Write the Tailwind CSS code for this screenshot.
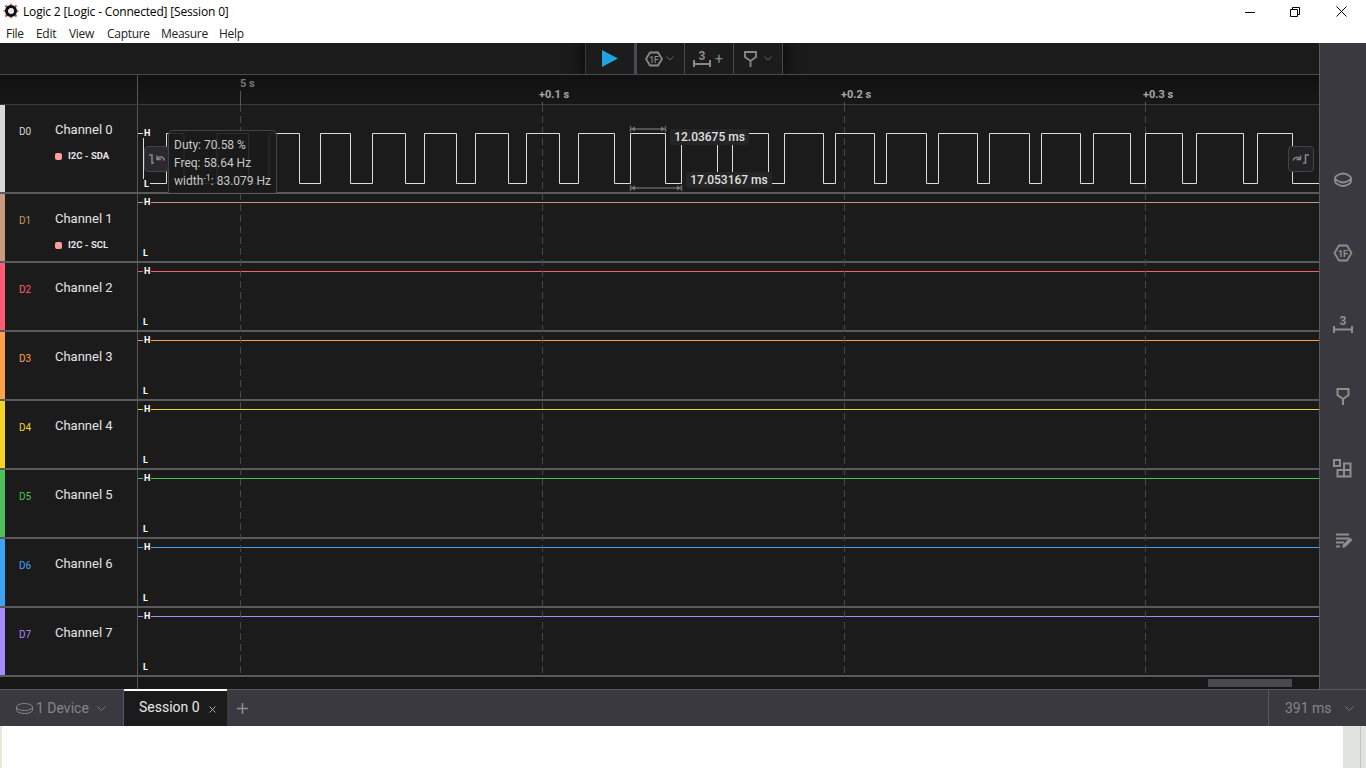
<!DOCTYPE html>
<html lang="en">
<head>
    <meta charset="UTF-8">
    <title>Logic 2 [Logic - Connected] [Session 0]</title>
    <script src="https://cdn.jsdelivr.net/npm/@tailwindcss/browser@4"></script>
</head>
<body class="w-[1366px] h-[768px] overflow-hidden bg-white flex flex-col font-['Roboto',sans-serif]">

    <!-- Window title + menu -->
    <div class="h-[43px] bg-white text-black font-['Open_Sans',sans-serif] text-[12px]">
        <div class="h-[23px] flex items-center relative">
            <svg class="ml-[3px] mt-[-1px]" width="16" height="16" viewBox="0 0 16 16">
                <rect x="1" y="1" width="14" height="14" rx="3" fill="#f2f2f2"/>
                <path d="M8 .5v3M8 12.500v3M.5 8h3M12.500 8h3" stroke="#e0883a" stroke-width="2"/>
                <path d="M2.500 2.500l2 2M11.500 11.500l2 2" stroke="#8b5bd6" stroke-width="2"/>
                <path d="M13.500 2.500l-2 2M4.500 11.500l-2 2" stroke="#d24c6a" stroke-width="2"/>
                <circle cx="8" cy="8" r="4.500" fill="none" stroke="#111" stroke-width="3"/>
                <circle cx="8" cy="8" r="1.500" fill="#ddd"/>
            </svg>
            <span class="ml-[4px] tracking-[-0.17px]">Logic 2 [Logic - Connected] [Session 0]</span>
            <div class="ml-auto flex items-center h-full">
                <svg class="mr-[35px]" width="10" height="10" viewBox="0 0 10 10"><path d="M0 5.5h10" stroke="#000"/></svg>
                <svg class="mr-[36px]" width="10" height="10" viewBox="0 0 10 10"><path d="M.5 2.5h7v7h-7zM2.5 2.5v-2h7v7h-2" fill="none" stroke="#000"/></svg>
                <svg class="mr-[19px]" width="11" height="11" viewBox="0 0 11 11"><path d="M.5.5l10 10M10.5.5l-10 10" stroke="#000"/></svg>
            </div>
        </div>
        <div class="h-[20px] flex items-center pl-[6px] pt-[1px] text-[#222] tracking-[-0.3px]">
            <span class="w-[30px]">File</span>
            <span class="w-[33px]">Edit</span>
            <span class="w-[38px]">View</span>
            <span class="w-[54px]">Capture</span>
            <span class="w-[58px]">Measure</span>
            <span>Help</span>
        </div>
    </div>

    <!-- App body -->
    <div class="h-[646px] flex bg-[#1b1b1b]">
        <div class="w-[1319px] relative flex flex-col">

            <!-- Toolbar -->
            <div class="h-[32px] flex justify-center border-b border-[#4a4a4e] overflow-hidden">
                <div class="flex h-full ml-[49px] bg-[#1c1c1c] shadow-[0_0_20px_#000]">
                    <div class="w-[49px] border-l border-[#3c3c3e] flex items-center justify-center">
                        <svg width="16" height="17" viewBox="0 0 16 17"><path d="M0 0l16 8.5L0 17z" fill="#22a3e0"/></svg>
                    </div>
                    <div class="w-[3px] bg-[#4a4a4e]"></div>
                    <div class="w-[48px] border-r border-[#4a4a4e] flex items-center justify-center gap-[3px] pr-[2px]">
                        <svg width="18" height="16" viewBox="0 0 18 16"><path d="M5 1.5h8L17 8l-4 6.500H5L1 8z" fill="none" stroke="#8a8a8a" stroke-width="1.800"/><text x="9" y="11.500" font-size="8.500" font-weight="500" font-family="Roboto" text-anchor="middle" fill="#8a8a8a">1F</text></svg>
                        <svg width="8" height="5" viewBox="0 0 8 5"><path d="M.5.500l3.500 3.500 3.500-3.500" fill="none" stroke="#666"/></svg>
                    </div>
                    <div class="w-[49px] border-r border-[#4a4a4e] flex items-center justify-center gap-[4px] pr-[2px]">
                        <svg width="18" height="18" viewBox="0 0 18 18"><text x="9" y="10" font-size="12" font-weight="700" font-family="Roboto" text-anchor="middle" fill="#8a8a8a">3</text><path d="M1 10v7M17 10v7M1 14h16" fill="none" stroke="#8a8a8a" stroke-width="2"/></svg>
                        <span class="text-[#8a8a8a] text-[14px] leading-none">+</span>
                    </div>
                    <div class="w-[49px] border-r border-[#4a4a4e] flex items-center justify-center gap-[7px]">
                        <svg width="13" height="16" viewBox="0 0 13 16"><path d="M1 1h11v5l-5.500 4L1 6zM6.500 10v6" fill="none" stroke="#8a8a8a" stroke-width="1.800"/></svg>
                        <svg width="8" height="5" viewBox="0 0 8 5"><path d="M.5.500l3.500 3.500 3.500-3.500" fill="none" stroke="#666"/></svg>
                    </div>
                </div>
            </div>

            <!-- Time ruler -->
            <div class="h-[30px] flex border-b border-[#3a3a3c] bg-gradient-to-b from-[#111111] to-[#171717] shrink-0">
                <div class="w-[138px] border-r border-[#555] shrink-0"></div>
                <div class="flex-1 relative font-bold text-[11px] leading-[13px] text-[#a8a8a8]">
                    <span class="absolute left-[102px] top-[2px] text-[#777]">5 s</span>
                    <span class="absolute left-[401px] top-[13px]">+0.1 s</span>
                    <span class="absolute left-[703px] top-[13px]">+0.2 s</span>
                    <span class="absolute left-[1005px] top-[13px]">+0.3 s</span>
                </div>
            </div>

            <!-- Channel 0 -->
            <div class="h-[89px] flex border-b-2 border-[#5a5a5c] shrink-0">
                <div class="w-[5px] bg-[#d8d8d8]"></div>
                <div class="w-[133px] border-r border-[#555] pt-[17px] flex">
                    <span class="w-[14px] ml-[14px] mt-[3px] text-[10px] leading-[14px] text-[#d8d8d8]">D0</span>
                    <div class="ml-[22px]">
                        <div class="text-[13px] leading-[16px] text-[#e4e4e4]">Channel 0</div>
                        <div class="mt-[12px] flex items-center text-[9.500px] leading-[12px] font-bold text-[#e4e4e4]"><span class="w-[7px] h-[7px] rounded-[2px] bg-[#ff9d9d] mr-[6px]"></span>I2C - SDA</div>
                    </div>
                </div>
                <div class="flex-1 relative">
                    <svg class="absolute inset-0 z-[11]" width="1181" height="87" viewBox="138 105 1181 87">
                        <path d="M138 133.500H143.500V183.500H166.500V133.500H184V183.500H217V133.500H248.500V183.500H269V133.500H299.500V183.500H320.500V133.500H350.500V183.500H372.500V133.500H405.500V183.500H424.500V133.500H456.500V183.500H475.500V133.500H508.500V183.500H526.500V133.500H559.500V183.500H578.500V133.500H614.500V183.500H630.500V133.500H665.500V183.500H681.500V133.500H717.500V183.500H732.500V133.500H768.500V183.500H784.500V133.500H823.500V183.500H835.500V133.500H874.500V183.500H886.500V133.500H926.500V183.500H938.500V133.500H977.500V183.500H989.500V133.500H1029.500V183.500H1041.500V133.500H1080.500V183.500H1093.500V133.500H1130.500V183.500H1145.500V133.500H1182.500V183.500H1196.500V133.500H1243.500V183.500H1257.500V133.500H1292.500V183.500H1319" fill="none" stroke="#dcdcdc"/>
                        <path d="M630.500 126v6M665.500 126v6M631 129h34M630.500 185v6M681.500 185v6M631 188h50" fill="none" stroke="#666" stroke-width="1.500"/>
                        <path d="M631 129l4-2.500v5zM665 129l-4-2.500v5zM631 188l4-2.500v5zM681 188l-4-2.500v5z" fill="#777"/>
                    </svg>
                    <span class="absolute z-20 left-[5px] top-[23px] px-[1px] bg-[#1b1b1b] text-[9px] leading-[10px] font-bold text-white">H</span>
                    <span class="absolute z-20 left-[5px] top-[74px] px-[1px] bg-[#1b1b1b] text-[9px] leading-[10px] font-bold text-white">L</span>
                    <div class="absolute z-20 left-[6px] top-[41px] w-[25px] h-[26px] rounded-[4px] border border-[#444] bg-[#2a2a2c] flex items-center justify-center">
                        <svg class="shrink-0" width="18" height="12" viewBox="0 0 18 12"><path d="M1 2h3v8h2" fill="none" stroke="#858585" stroke-width="1.600"/><path d="M9.500 6.500c1-3.500 5.500-3.500 7 1M9 2.500v4h4" fill="none" stroke="#858585" stroke-width="1.500"/></svg>
                    </div>
                    <div class="absolute left-[30px] top-[25px] w-[109px] h-[63px] z-20 rounded-t-[5px] border border-b-0 border-[#444] bg-[#1b1b1b]/90 pl-[5px] pt-[5px] text-[12px] leading-[18px] text-[#c8c8c8] whitespace-nowrap">
                        <div>Duty: 70.58 %</div>
                        <div>Freq: 58.64 Hz</div>
                        <div>width<sup class="text-[9px] leading-none">-1</sup>: 83.079 Hz</div>
                    </div>
                    <div class="absolute left-[532px] top-[24px] h-[16px] w-[79px] z-20 rounded-[2px] bg-[#252526] text-[12px] leading-[16px] font-medium text-[#e0e0e0] text-center whitespace-nowrap">12.03675 ms</div>
                    <div class="absolute left-[548px] top-[67px] h-[16px] w-[86px] z-20 rounded-[2px] bg-[#252526] text-[12px] leading-[16px] font-medium text-[#e0e0e0] text-center whitespace-nowrap">17.053167 ms</div>
                    <div class="absolute z-20 left-[1150px] top-[41px] w-[26px] h-[26px] rounded-[4px] border border-[#444] bg-[#232325] flex items-center justify-center">
                        <svg class="shrink-0" width="18" height="12" viewBox="0 0 18 12"><path d="M1 7.500c1.500-4 5.500-4 7-1M8.500 2.500v4h-4" fill="none" stroke="#858585" stroke-width="1.500"/><path d="M11 10h2.500V2H17" fill="none" stroke="#858585" stroke-width="1.600"/></svg>
                    </div>
                </div>
            </div>

            <!-- Channel 1 -->
            <div class="h-[69px] flex border-b-2 border-[#5a5a5c] shrink-0">
                <div class="w-[5px] bg-[#c99a80]"></div>
                <div class="w-[133px] border-r border-[#555] pt-[17px] flex">
                    <span class="w-[14px] ml-[14px] mt-[3px] text-[10px] leading-[14px] text-[#c99a60]">D1</span>
                    <div class="ml-[22px]">
                        <div class="text-[13px] leading-[16px] text-[#e4e4e4]">Channel 1</div>
                        <div class="mt-[12px] flex items-center text-[9.500px] leading-[12px] font-bold text-[#e4e4e4]"><span class="w-[7px] h-[7px] rounded-[2px] bg-[#ff9d9d] mr-[6px]"></span>I2C - SCL</div>
                    </div>
                </div>
                <div class="flex-1 flex flex-col justify-between pt-[4px] pb-[3px] text-[9px] leading-[9px] font-bold text-white">
                    <div class="flex items-center"><i class="w-[5px] h-px bg-[#c99a80]"></i><span class="w-[8px] pl-[1px]">H</span><i class="flex-1 h-px bg-[#c99a80]"></i></div>
                    <span class="pl-[5px]">L</span>
                </div>
            </div>

            <!-- Channel 2 -->
            <div class="h-[69px] flex border-b-2 border-[#5a5a5c] shrink-0">
                <div class="w-[5px] bg-[#ff5c74]"></div>
                <div class="w-[133px] border-r border-[#555] pt-[17px] flex">
                    <span class="w-[14px] ml-[14px] mt-[3px] text-[10px] leading-[14px] text-[#ff5c6c]">D2</span>
                    <div class="ml-[22px] text-[13px] leading-[16px] text-[#e4e4e4]">Channel 2</div>
                </div>
                <div class="flex-1 flex flex-col justify-between pt-[4px] pb-[3px] text-[9px] leading-[9px] font-bold text-white">
                    <div class="flex items-center"><i class="w-[5px] h-px bg-[#ff5c74]"></i><span class="w-[8px] pl-[1px]">H</span><i class="flex-1 h-px bg-[#ff5c74]"></i></div>
                    <span class="pl-[5px]">L</span>
                </div>
            </div>

            <!-- Channel 3 -->
            <div class="h-[69px] flex border-b-2 border-[#5a5a5c] shrink-0">
                <div class="w-[5px] bg-[#ffa04d]"></div>
                <div class="w-[133px] border-r border-[#555] pt-[17px] flex">
                    <span class="w-[14px] ml-[14px] mt-[3px] text-[10px] leading-[14px] text-[#ffa04d]">D3</span>
                    <div class="ml-[22px] text-[13px] leading-[16px] text-[#e4e4e4]">Channel 3</div>
                </div>
                <div class="flex-1 flex flex-col justify-between pt-[4px] pb-[3px] text-[9px] leading-[9px] font-bold text-white">
                    <div class="flex items-center"><i class="w-[5px] h-px bg-[#ffa04d]"></i><span class="w-[8px] pl-[1px]">H</span><i class="flex-1 h-px bg-[#ffa04d]"></i></div>
                    <span class="pl-[5px]">L</span>
                </div>
            </div>

            <!-- Channel 4 -->
            <div class="h-[69px] flex border-b-2 border-[#5a5a5c] shrink-0">
                <div class="w-[5px] bg-[#f5d327]"></div>
                <div class="w-[133px] border-r border-[#555] pt-[17px] flex">
                    <span class="w-[14px] ml-[14px] mt-[3px] text-[10px] leading-[14px] text-[#f5d327]">D4</span>
                    <div class="ml-[22px] text-[13px] leading-[16px] text-[#e4e4e4]">Channel 4</div>
                </div>
                <div class="flex-1 flex flex-col justify-between pt-[4px] pb-[3px] text-[9px] leading-[9px] font-bold text-white">
                    <div class="flex items-center"><i class="w-[5px] h-px bg-[#f5d327]"></i><span class="w-[8px] pl-[1px]">H</span><i class="flex-1 h-px bg-[#f5d327]"></i></div>
                    <span class="pl-[5px]">L</span>
                </div>
            </div>

            <!-- Channel 5 -->
            <div class="h-[69px] flex border-b-2 border-[#5a5a5c] shrink-0">
                <div class="w-[5px] bg-[#4ec25a]"></div>
                <div class="w-[133px] border-r border-[#555] pt-[17px] flex">
                    <span class="w-[14px] ml-[14px] mt-[3px] text-[10px] leading-[14px] text-[#4ec25a]">D5</span>
                    <div class="ml-[22px] text-[13px] leading-[16px] text-[#e4e4e4]">Channel 5</div>
                </div>
                <div class="flex-1 flex flex-col justify-between pt-[4px] pb-[3px] text-[9px] leading-[9px] font-bold text-white">
                    <div class="flex items-center"><i class="w-[5px] h-px bg-[#4ec25a]"></i><span class="w-[8px] pl-[1px]">H</span><i class="flex-1 h-px bg-[#4ec25a]"></i></div>
                    <span class="pl-[5px]">L</span>
                </div>
            </div>

            <!-- Channel 6 -->
            <div class="h-[69px] flex border-b-2 border-[#5a5a5c] shrink-0">
                <div class="w-[5px] bg-[#3fa2f5]"></div>
                <div class="w-[133px] border-r border-[#555] pt-[17px] flex">
                    <span class="w-[14px] ml-[14px] mt-[3px] text-[10px] leading-[14px] text-[#3fa2f5]">D6</span>
                    <div class="ml-[22px] text-[13px] leading-[16px] text-[#e4e4e4]">Channel 6</div>
                </div>
                <div class="flex-1 flex flex-col justify-between pt-[4px] pb-[3px] text-[9px] leading-[9px] font-bold text-white">
                    <div class="flex items-center"><i class="w-[5px] h-px bg-[#3fa2f5]"></i><span class="w-[8px] pl-[1px]">H</span><i class="flex-1 h-px bg-[#3fa2f5]"></i></div>
                    <span class="pl-[5px]">L</span>
                </div>
            </div>

            <!-- Channel 7 -->
            <div class="h-[69px] flex border-b-2 border-[#5a5a5c] shrink-0">
                <div class="w-[5px] bg-[#a98bff]"></div>
                <div class="w-[133px] border-r border-[#555] pt-[17px] flex">
                    <span class="w-[14px] ml-[14px] mt-[3px] text-[10px] leading-[14px] text-[#a98bff]">D7</span>
                    <div class="ml-[22px] text-[13px] leading-[16px] text-[#e4e4e4]">Channel 7</div>
                </div>
                <div class="flex-1 flex flex-col justify-between pt-[4px] pb-[3px] text-[9px] leading-[9px] font-bold text-white">
                    <div class="flex items-center"><i class="w-[5px] h-px bg-[#a98bff]"></i><span class="w-[8px] pl-[1px]">H</span><i class="flex-1 h-px bg-[#a98bff]"></i></div>
                    <span class="pl-[5px]">L</span>
                </div>
            </div>

            <!-- Horizontal scrollbar -->
            <div class="h-[12px] flex bg-[#171717] items-center">
                <div class="w-[138px] h-full border-r border-[#555]"></div>
                <div class="ml-[1070px] w-[84px] h-[8px] bg-[#4a4a4c]"></div>
            </div>

            <!-- Time grid lines, over the channel rows -->
            <svg class="absolute left-0 top-0 z-10 pointer-events-none" width="1319" height="646" viewBox="0 43 1319 646">
                <path d="M240.500 91v14M542.500 102v3M844.500 102v3M1145.500 102v3" stroke="#555"/>
                <path d="M240.500 105V677M542.500 105V677M844.500 105V677M1145.500 105V677" stroke="#47474b" stroke-dasharray="7 4"/>
            </svg>
        </div>

        <!-- Right side panel -->
        <div class="w-[47px] bg-[#3a393f] border-l border-[#59595d] flex flex-col items-center gap-[52px] pt-[127px]">
            <svg width="20" height="20" viewBox="0 0 20 20"><path d="M2 8c0-2 5-4.500 8-4.500S18 6 18 8s-5 4.500-8 4.500S2 10 2 8zM2 8v3.500c0 2 5 4.500 8 4.500s8-2.500 8-4.500V8" fill="none" stroke="#8e8e8e" stroke-width="1.800" stroke-linejoin="round"/></svg>
            <svg class="mt-[1px]" width="20" height="20" viewBox="0 0 20 20"><path d="M6 2.500h8L18.500 10 14 17.500H6L1.500 10z" fill="none" stroke="#8e8e8e" stroke-width="1.800"/><text x="10" y="13.500" font-size="9.500" font-weight="700" font-family="Roboto" text-anchor="middle" fill="#8e8e8e">1F</text></svg>
            <svg width="20" height="20" viewBox="0 0 20 20"><text x="10" y="10" font-size="12" font-weight="700" font-family="Roboto" text-anchor="middle" fill="#8e8e8e">3</text><path d="M1 11v7M19 11v7M1 14.500h18" fill="none" stroke="#8e8e8e" stroke-width="2"/></svg>
            <svg width="20" height="20" viewBox="0 0 20 20"><path d="M4.500 2h11v6L10 12 4.500 8zM10 12v6" fill="none" stroke="#8e8e8e" stroke-width="2"/></svg>
            <svg width="20" height="20" viewBox="0 0 20 20"><path d="M1 1h6v6H1zM11 4.500h6.500v6.500H11zM4.500 11h6.500v6.500H4.500zM11 11h6.500v6.500H11z" fill="none" stroke="#8e8e8e" stroke-width="2"/></svg>
            <svg width="20" height="20" viewBox="0 0 20 20"><path d="M3 3.500h13M3 7.500h13M3 11.500h8M3 15.500h4" fill="none" stroke="#8e8e8e" stroke-width="2"/><path d="M9 17l1-3.500 7-7 2.500 2.500-7 7z" fill="#8e8e8e"/></svg>
        </div>
    </div>

    <!-- Bottom tabs -->
    <div class="h-[37px] flex bg-[#3a393f] border-t border-[#59595d]">
        <div class="w-[124px] flex items-center pl-[16px] border-r border-[#59595d] text-[14px] text-[#85858a]">
            <svg width="17" height="13" viewBox="0 0 17 13"><path d="M.5 5c0-2 4-3.500 8-3.500s8 1.500 8 3.500-4 3.500-8 3.500S.5 7 .5 5zM.5 5v3c0 2 4 3.500 8 3.500s8-1.500 8-3.500V5" fill="none" stroke="#85858a"/></svg>
            <span class="ml-[3px]">1 Device</span>
            <svg class="ml-[8px]" width="9" height="5" viewBox="0 0 9 5"><path d="M.5.500l4 4 4-4" fill="none" stroke="#77777c"/></svg>
        </div>
        <div class="w-[103px] mt-[-1px] bg-[#1b1b1b] border-t-2 border-white flex items-center pl-[15px] text-[14px] text-[#e8e8e8]">
            <span class="mt-[-2px]">Session 0</span>
            <svg class="ml-[9px] mt-[2px]" width="7" height="7" viewBox="0 0 7 7"><path d="M.5.500l6 6M6.500.500l-6 6" stroke="#aaa"/></svg>
        </div>
        <svg class="ml-[10px] self-center" width="11" height="11" viewBox="0 0 11 11"><path d="M5.500 0v11M0 5.500h11" stroke="#8e8e8e" stroke-width="1.500"/></svg>
        <div class="ml-auto w-[98px] border-l border-[#59595d] flex items-center pl-[16px] text-[14px] text-[#85858a]">
            <span>391 ms</span>
            <svg class="ml-[13px]" width="9" height="5" viewBox="0 0 9 5"><path d="M.5.500l4 4 4-4" fill="none" stroke="#77777c"/></svg>
        </div>
    </div>

    <!-- Desktop showing through under the window -->
    <div class="h-[42px] flex">
        <div class="w-[2px] bg-[#efe5da]"></div>
        <div class="w-[1341px] bg-white"></div>
        <div class="w-[18px] bg-[#dfe4de] border-r border-[#c4c8c2]"></div>
        <div class="flex-1 bg-[#dfe4de]"></div>
    </div>
</body>
</html>
